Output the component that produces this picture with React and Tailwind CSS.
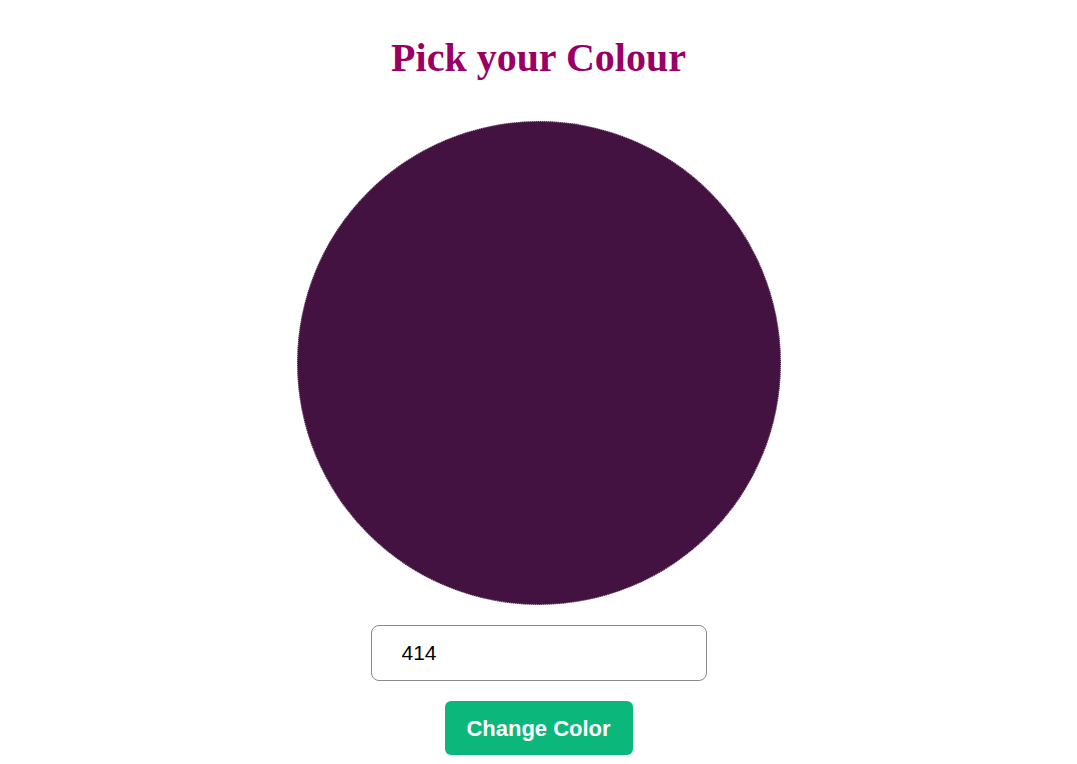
import React, { useState } from "react";

export default function App() {
  const [value, setValue] = useState("414");
  const [color, setColor] = useState("#441241");

  return (
    <div className="flex flex-col items-center bg-white min-h-screen">
      <h1 className="mt-[35px] text-[40px] leading-[46px] font-bold text-[#990066] [font-family:'Liberation_Serif',serif]">
        Pick your Colour
      </h1>
      <div
        className="mt-[40px] w-[484px] h-[484px] rounded-full border border-dotted border-[#a08aa0]"
        style={{ backgroundColor: color }}
      />
      <input
        className="mt-[20px] w-[336px] h-[56px] rounded-lg border border-[#8a8a8a] pl-[30px] text-[21px] text-black outline-none [font-family:'Liberation_Sans',sans-serif]"
        value={value}
        onChange={(e) => setValue(e.target.value)}
      />
      <button
        className="mt-[20px] w-[188px] h-[54px] rounded-md bg-[#0bb77b] text-white text-[22px] font-bold [font-family:'Liberation_Sans',sans-serif]"
        onClick={() => setColor("#" + value)}
      >
        Change Color
      </button>
    </div>
  );
}
